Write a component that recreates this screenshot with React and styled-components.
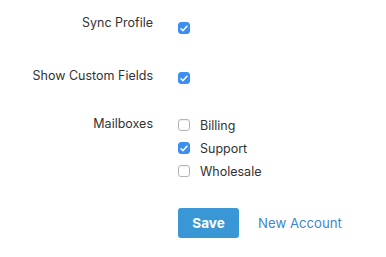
import React, { useState } from "react";
import styled, { createGlobalStyle } from "styled-components";

const GlobalStyle = createGlobalStyle`
  body {
    margin: 0;
    background: #fff;
    font-family: "Inter", "Liberation Sans", sans-serif;
    color: #333;
  }
`;

const Form = styled.form`
  display: grid;
  grid-template-columns: 153px 1fr;
  column-gap: 25px;
  padding-top: 14px;
  font-size: 12.5px;
`;

const Label = styled.div`
  text-align: right;
  line-height: 18px;
  color: #333;
`;

const Field = styled.div`
  display: flex;
  flex-direction: column;
  gap: 5px;
  padding-top: ${({ top }) => top || 0}px;
  margin-bottom: ${({ bottom }) => bottom || 0}px;
`;

const Option = styled.label`
  display: flex;
  align-items: center;
  gap: 10px;
  height: 18px;
  color: #333;
  cursor: pointer;
`;

const Box = styled.span`
  width: 12px;
  height: 12px;
  border-radius: 3px;
  box-sizing: border-box;
  display: flex;
  align-items: center;
  justify-content: center;
  background: ${({ checked }) => (checked ? "#3b8ff3" : "#fff")};
  border: 1px solid ${({ checked }) => (checked ? "#3b8ff3" : "#b5b5b5")};
  box-shadow: ${({ checked }) =>
    checked ? "none" : "inset 0 1px 1px rgba(0,0,0,0.06)"};
`;

const Actions = styled.div`
  display: flex;
  align-items: center;
  gap: 19px;
`;

const SaveButton = styled.button`
  width: 61px;
  height: 30px;
  border: none;
  border-radius: 3px;
  background: #3a97d6;
  color: #fff;
  font-family: inherit;
  font-size: 13.5px;
  font-weight: 700;
  cursor: pointer;
`;

const LinkButton = styled.a`
  color: #3f87c8;
  font-size: 13.2px;
  text-decoration: none;
`;

const Check = ({ checked }) => (
  <Box checked={checked}>
    {checked && (
      <svg width="8" height="7" viewBox="0 0 8 7">
        <path
          d="M1 3.8 L3 5.6 L7 1.2"
          fill="none"
          stroke="#fff"
          strokeWidth="1.5"
          strokeLinecap="round"
          strokeLinejoin="round"
        />
      </svg>
    )}
  </Box>
);

export default function App() {
  const [mailboxes] = useState([
    { name: "Billing", checked: false },
    { name: "Support", checked: true },
    { name: "Wholesale", checked: false },
  ]);

  return (
    <>
      <GlobalStyle />
      <Form>
        <Label>Sync Profile</Label>
        <Field top={5} bottom={30}>
          <Option>
            <Check checked />
          </Option>
        </Field>

        <Label>Show Custom Fields</Label>
        <Field top={2} bottom={28}>
          <Option>
            <Check checked />
          </Option>
        </Field>

        <Label>Mailboxes</Label>
        <Field top={1} bottom={28}>
          {mailboxes.map((m) => (
            <Option key={m.name}>
              <Check checked={m.checked} />
              {m.name}
            </Option>
          ))}
        </Field>

        <div />
        <Actions>
          <SaveButton type="button">Save</SaveButton>
          <LinkButton href="#">New Account</LinkButton>
        </Actions>
      </Form>
    </>
  );
}
